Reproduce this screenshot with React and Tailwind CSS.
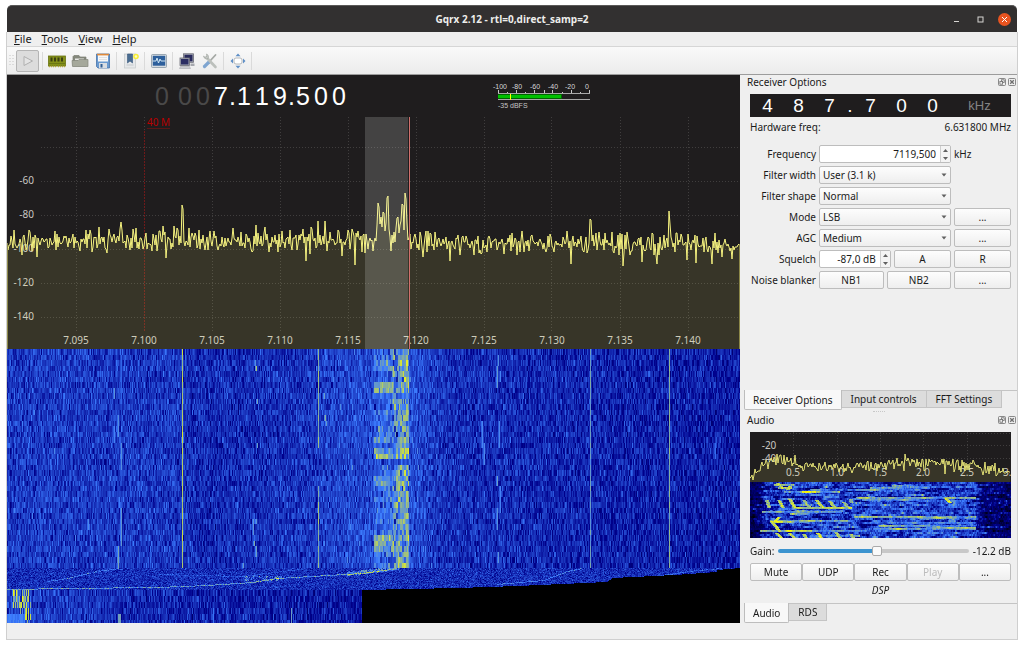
import React, { useLayoutEffect, useRef, useState } from 'react';

// small seeded generator so the noise is stable between renders
function makeRandom(seed) {
  let s = seed;
  return () => {
    s = (s + 0x6d2b79f5) | 0;
    let t = Math.imul(s ^ (s >>> 15), 1 | s);
    t = (t + Math.imul(t ^ (t >>> 7), 61 | t)) ^ t;
    return ((t ^ (t >>> 14)) >>> 0) / 4294967296;
  };
}

const gauss = (rnd) => rnd() + rnd() + rnd() + rnd() - 2;

// waterfall palette: black -> blue -> light blue -> yellow
function levelColor(v) {
  const i = Math.max(0, Math.min(170, v));
  if (i < 20) return [0, 0, 0];
  if (i < 70) return [0, 0, (140 * (i - 20)) / 50];
  if (i < 100) return [(60 * (i - 70)) / 30, (125 * (i - 70)) / 30, (115 * (i - 70)) / 30 + 140];
  if (i < 150) return [(195 * (i - 100)) / 50 + 60, (130 * (i - 100)) / 50 + 125, 255 - (255 * (i - 100)) / 50];
  return [255, 255 - (255 * (i - 150)) / 100, 0];
}

// linear interpolation over [x, y] points
function lerp(points, x) {
  if (x <= points[0][0]) return points[0][1];
  for (let i = 1; i < points.length; i++) {
    const [x1, y1] = points[i];
    const [x0, y0] = points[i - 1];
    if (x <= x1) return y0 + ((y1 - y0) * (x - x0)) / (x1 - x0 || 1);
  }
  return points[points.length - 1][1];
}

const CARRIERS = [
  { x: 175, level: 131, spread: 8 },
  { x: 311, level: 121, spread: 9 },
  { x: 583, level: 111, spread: 7 },
  { x: 662, level: 119, spread: 6 },
];

// weak drifting signals: x, first row, last row, level
const WEAK = [
  [114, 1, 9, 94], [114, 17, 21, 106], [111, 12, 15, 106], [107, 7, 8, 108], [107, 14, 16, 102],
  [112, 27, 28, 100], [114, 29, 35, 109], [111, 36, 39, 115],
  [249, 3, 3, 128], [248, 2, 2, 106], [250, 9, 9, 114], [250, 17, 17, 112], [249, 31, 31, 108],
  [246, 31, 33, 108], [247, 35, 35, 118], [249, 36, 37, 112], [236, 39, 39, 110],
  [317, 8, 8, 112], [318, 12, 12, 120], [319, 13, 13, 110], [345, 21, 21, 108],
  [491, 1, 2, 106], [490, 3, 6, 110], [493, 4, 5, 102], [475, 13, 17, 103], [477, 17, 20, 104],
  [492, 13, 17, 104], [490, 23, 24, 112], [493, 25, 29, 102], [490, 29, 32, 107], [491, 37, 38, 108],
  [81, 31, 32, 104], [708, 17, 19, 96],
];

const WIDE_ROWS = [6, 7, 19, 34, 35];
const MEDIUM_ROWS = [2, 3, 16, 18, 23, 24, 36];

const BLACK_EDGE = [
  [355, 242], [450, 240], [510, 238], [600, 234], [605, 230], [667, 227],
  [709, 224], [710, 222], [733, 220],
];

const STREAKS = [
  { pts: [[0, 241], [60, 240], [150, 239], [200, 237], [245, 234], [270, 230], [355, 225], [390, 220]], level: 34 },
  { pts: [[40, 233], [60, 230], [90, 223], [112, 220]], level: 22 },
  { pts: [[150, 226], [235, 228], [300, 220]], level: 10 },
  { pts: [[490, 236], [536, 232], [560, 223], [575, 220]], level: 22 },
  { pts: [[640, 229], [690, 222], [715, 220]], level: 16 },
];

function waterfallLevels(w, h) {
  const rnd = makeRandom(71);
  const out = new Float32Array(w * h);
  const rows = 40;
  const bounds = [];
  for (let r = 0; r <= rows; r++) bounds.push(Math.round(r * 5.5));

  for (let r = 0; r < rows; r++) {
    // activity inside the voice channel for this row
    let voice = 95;
    if (WIDE_ROWS.includes(r)) voice = 118;
    if (MEDIUM_ROWS.includes(r)) voice = 108;
    const quiet = r === 20;
    const row = new Float32Array(w);
    let cell = 0;
    for (let x = 0; x < w; x++) {
      const base = lerp([[0, 84], [170, 83], [195, 80], [290, 82], [345, 87], [410, 88], [440, 81], [733, 76]], x);
      row[x] = base + gauss(rnd) * 11;
      if (x >= 367 && x < 402 && !quiet) {
        if (x % 2 || rnd() > 0.75) cell = gauss(rnd);
        if (x < 386) row[x] = voice + cell * 15;
        else row[x] = lerp([[386, 100], [394, 114], [400, 118]], x) + cell * 25;
      }
    }
    CARRIERS.forEach((c) => {
      if (c.x === 311 && r > 17 && r < 25) return;
      row[c.x] = c.level + gauss(rnd) * c.spread;
    });
    WEAK.forEach(([x, a, b, level]) => {
      if (r >= a && r <= b) {
        row[x] = level;
        row[x - 1] = (row[x - 1] + level) / 2;
      }
    });
    for (let y = bounds[r]; y < bounds[r + 1]; y++) out.set(row, y * w);
  }

  // retuned section, one line per pixel
  for (let y = 220; y < 242; y++) {
    for (let x = 0; x < w; x++) out[y * w + x] = 81 + gauss(rnd) * 10;
  }
  STREAKS.forEach(({ pts, level }) => {
    for (let x = pts[0][0]; x < Math.min(w, pts[pts.length - 1][0]); x++) {
      const y = Math.round(lerp(pts, x));
      if (y < 242) out[y * w + x] += level * (0.4 + rnd() * 0.8);
    }
  });
  for (let x = 238; x < 275; x++) {
    for (let y = 228; y < 233; y++) {
      if (rnd() > 0.45) out[y * w + x] += 34 * rnd();
    }
  }
  for (let x = 340; x < 392; x++) {
    const y = Math.round(lerp([[340, 226], [392, 220]], x));
    for (let k = -2; k < 2; k++) {
      if (y + k >= 220) out[(y + k) * w + x] += 34 * rnd();
    }
  }

  for (let y = 242; y < h; y += 6) {
    const row = new Float32Array(w);
    for (let x = 0; x < w; x++) {
      row[x] = lerp([[0, 85], [60, 84], [130, 79], [355, 75]], x) + gauss(rnd) * 11;
    }
    const first = y < 256 ? 6 : 12;
    for (let x = first; x < 24; x++) if (rnd() > 0.45) row[x] = 98 + rnd() * 50;
    if (y > 262) for (let x = 0; x < 18; x++) row[x] = 96 + rnd() * 8;
    if (y > 254) row[284] = 112;
    if (y > 258) row[206] = 98;
    if (y > 265) [111, 112, 113].forEach((x) => { row[x] = 114; });
    for (let k = y; k < Math.min(h, y + 6); k++) out.set(row, k * w);
  }

  for (let x = 355; x < w; x++) {
    for (let y = Math.round(lerp(BLACK_EDGE, x)); y < h; y++) out[y * w + x] = 0;
  }
  return out;
}

// voice bars in the audio waterfall: y, from, to, level
const AUDIO_BARS = [
  [2, 24, 44, 126], [3, 142, 165, 120], [5, 28, 42, 130], [5, 120, 180, 110], [7, 60, 170, 102],
  [9, 34, 90, 112], [9, 52, 66, 150], [15, 106, 226, 118], [17, 112, 170, 106], [25, 42, 102, 132],
  [29, 12, 92, 112], [31, 40, 60, 118], [34, 104, 226, 118], [35, 150, 226, 106], [38, 20, 98, 122],
  [39, 20, 58, 132], [40, 120, 226, 102], [43, 128, 226, 108], [45, 180, 226, 116], [46, 124, 226, 112],
  [48, 10, 62, 122], [48, 70, 120, 104], [53, 60, 110, 108],
];

// chirps: x, y, dx, length
const AUDIO_CHIRPS = [
  [15, 18, 0.3, 8], [27, 18, 0.5, 8], [38, 17, 0.6, 9], [52, 18, 0.8, 8], [65, 18, 0.8, 8], [78, 19, 0.8, 6],
  [92, 20, 0.8, 5], [99, 17, 0.2, 4], [26, 1, 0.9, 6], [38, 4, -0.6, 4], [27, 35, -0.9, 6], [20, 40, 0.9, 10],
  [25, 51, 0.9, 5], [38, 51, 0.9, 5], [52, 52, 0.5, 4], [66, 51, 0.8, 5], [84, 50, 0.8, 6], [99, 52, 0.5, 4],
  [194, 16, 0.9, 5],
];

function audioLevels(w, h) {
  const rnd = makeRandom(19);
  const out = new Float32Array(w * h);
  for (let y = 0; y < h; y += 2) {
    const loud = gauss(rnd) * 6;
    let drift = 0;
    for (let x = 0; x < w; x++) {
      const base = lerp([[0, 50], [9, 58], [16, 80], [60, 87], [110, 85], [224, 86], [231, 66], [261, 54]], x);
      drift = drift * 0.72 + gauss(rnd) * 14;
      const v = base + drift + (x > 16 && x < 230 ? loud : 0);
      out[y * w + x] = v;
      if (y + 1 < h) out[(y + 1) * w + x] = v + gauss(rnd) * 4;
    }
  }
  AUDIO_BARS.forEach(([y, from, to, level]) => {
    let drift = 0;
    for (let x = from; x < to; x++) {
      drift = drift * 0.8 + gauss(rnd) * 11;
      for (let k = 0; k < 2; k++) {
        const i = (y + k) * w + x;
        out[i] = Math.max(out[i], level + drift - k * 6);
      }
    }
  });
  AUDIO_CHIRPS.forEach(([x, y, dx, len]) => {
    const peak = 128 + rnd() * 20;
    for (let i = 0; i < len; i++) {
      for (let k = 0; k < 4; k++) {
        const row = y + i;
        if (row < h) out[row * w + Math.round(x + dx * i) + k] = peak - Math.abs(k - 1.5) * 9 + gauss(rnd) * 12;
      }
    }
  });
  return out;
}

function Waterfall({ width, height, levels, label }) {
  const ref = useRef(null);

  useLayoutEffect(() => {
    const ctx = ref.current.getContext('2d');
    const image = ctx.createImageData(width, height);
    const data = levels(width, height);
    for (let i = 0; i < data.length; i++) {
      const [r, g, b] = levelColor(data[i]);
      image.data[i * 4] = r;
      image.data[i * 4 + 1] = g;
      image.data[i * 4 + 2] = b;
      image.data[i * 4 + 3] = 255;
    }
    ctx.putImageData(image, 0, 0);
  }, [width, height, levels]);

  return (
    <canvas
      ref={ref}
      width={width}
      height={height}
      role="img"
      aria-label={label}
      className="block h-full w-full [image-rendering:pixelated]"
    />
  );
}

// x -> y overrides for peaks and dips in the main trace
const PEAKS = {
  7: 113, 22: 113, 23: 115, 79: 113, 92: 110, 113: 112, 114: 105, 115: 113, 159: 141, 175: 88, 176: 92, 182: 111,
  203: 114, 226: 111, 249: 108, 275: 114, 299: 144, 305: 112, 311: 104, 318: 104, 331: 113, 335: 139, 348: 148,
  370: 108, 371: 86, 372: 90, 373: 107, 374: 100, 375: 110, 376: 95, 377: 96, 378: 114, 379: 106, 380: 81, 381: 79,
  382: 112, 384: 134, 387: 115, 389: 111, 390: 101, 391: 100, 392: 116, 393: 108, 394: 104, 395: 87, 396: 88,
  397: 113, 398: 76, 399: 82, 400: 106, 402: 121, 419: 114, 443: 144, 560: 114, 564: 147, 583: 102, 584: 103,
  605: 115, 616: 149, 635: 145, 650: 147, 662: 94, 663: 107, 680: 143, 705: 147, 715: 140, 725: 142,
};

function spectrumPoints() {
  const rnd = makeRandom(5);
  const pts = [];
  for (let x = 0; x <= 732; x++) {
    const base = lerp([[0, 126], [80, 124], [400, 123], [440, 126], [733, 127]], x);
    let y = base + gauss(rnd) * 10;
    if (rnd() > 0.97) y += 9;
    pts.push([x, Math.round(PEAKS[x] ?? y)]);
  }
  return pts;
}

function audioPoints() {
  const rnd = makeRandom(12);
  const pts = [];
  for (let x = 0; x <= 260; x++) {
    const base = lerp([[0, 47], [3, 43], [9, 42], [12, 32], [26, 28], [40, 28], [50, 34], [100, 35], [125, 35], [150, 30],
      [158, 28], [170, 33], [190, 29], [205, 33], [228, 33], [234, 38], [261, 39]], x);
    let y = base + gauss(rnd) * 5;
    if (rnd() > 0.93) y += 6;
    pts.push([x, Math.round(Math.min(48, y))]);
  }
  return pts;
}

const toLine = (pts) => pts.map(([x, y], i) => `${i ? 'L' : 'M'}${x} ${y}`).join('');

const SPECTRUM = spectrumPoints();
const AUDIO = audioPoints();

const pct = (x, total) => `${(x / total) * 100}%`;

const FREQ_TICKS = [
  [69, '7.095'], [137, '7.100'], [205, '7.105'], [273, '7.110'], [341, '7.115'],
  [409, '7.120'], [477, '7.125'], [545, '7.130'], [613, '7.135'], [681, '7.140'],
];
const DB_TICKS = [[30, ''], [64, '-60'], [98, '-80'], [132, '-100'], [166, '-120'], [200, '-140']];

function SpectrumPlot() {
  return (
    <svg width="100%" height="232" className="block shrink-0 font-['Noto_Sans',sans-serif] text-[10px]" role="img" aria-label="Spectrum">
      <g stroke="#403e3e" strokeDasharray="1 2" shapeRendering="crispEdges">
        {DB_TICKS.map(([y]) => <line key={y} x1="34" x2="100%" y1={y} y2={y} />)}
        {FREQ_TICKS.map(([x]) => <line key={x} x1={pct(x, 733)} x2={pct(x, 733)} y1="0" y2="214" />)}
      </g>
      <line x1={pct(137, 733)} x2={pct(137, 733)} y1="14" y2="214" stroke="#6e1a1a" strokeDasharray="2 1" shapeRendering="crispEdges" />
      <text x={pct(140, 733)} y="9" fill="#b80000">40 M</text>
      <line x1={pct(140, 733)} x2={pct(163, 733)} y1="11" y2="11" stroke="#5a1616" shapeRendering="crispEdges" />
      <g fill="#c9c7c2">
        {DB_TICKS.map(([y, t]) => <text key={y} x="27" y={y + 3} textAnchor="end">{t}</text>)}
        {FREQ_TICKS.map(([x, t]) => <text key={x} x={pct(x, 733)} y="227" textAnchor="middle">{t}</text>)}
      </g>
      <svg width="100%" height="232" viewBox="0 0 733 232" preserveAspectRatio="none">
        <path d={`${toLine(SPECTRUM)}L732 232L0 232Z`} fill="#ffff80" fillOpacity="0.11" />
        <path d={toLine(SPECTRUM)} fill="none" stroke="#f6f380" strokeWidth="1" />
        <path d="M732.5 127V232M0.5 126V232" stroke="#8b8748" strokeWidth="1" />
        <rect x="358" y="0" width="43" height="232" fill="#fff" fillOpacity="0.17" />
        <path d="M402.500 0V232" stroke="#d0706c" strokeWidth="1" />
      </svg>
    </svg>
  );
}

function SignalMeter() {
  return (
    <svg width="104" height="42" viewBox="0 0 104 42" className="shrink-0 font-['Liberation_Sans',sans-serif] text-[7px]" role="img" aria-label="Signal level -35 dBFS">
      <g fill="#d8d8d8" textAnchor="middle">
        <text x="12" y="14">-100</text>
        <text x="29" y="14">-80</text>
        <text x="47" y="14">-60</text>
        <text x="65" y="14">-40</text>
        <text x="82" y="14">-20</text>
        <text x="99" y="14">0</text>
      </g>
      <path d="M10.500 15v4M19.500 17v2M28.500 15v4M37.500 17v2M46.500 15v4M56.500 15v4M64.500 15v4M74.500 17v2M83.500 15v4M92.500 17v2M101.500 15v4" stroke="#c8c8c8" shapeRendering="crispEdges" />
      <path d="M10 18.500H102M10 24.500H102" stroke="#a8a8a8" shapeRendering="crispEdges" />
      <rect x="10" y="19" width="64" height="5" fill="#006400" />
      <rect x="10" y="20" width="63" height="3" fill="#00c000" />
      <rect x="22" y="19" width="1" height="6" fill="#ffff00" />
      <text x="10" y="33" fill="#c4c4c4">-35 dBFS</text>
    </svg>
  );
}

function FrequencyDisplay() {
  return (
    <div className="flex items-center font-['Liberation_Sans',sans-serif] text-[25px] leading-none text-white">
      {'0 007.119.500'.split('').map((ch, i) => {
        const narrow = ch === '.' || ch === ' ';
        return (
          <span
            key={i}
            className={`flex justify-center ${narrow ? 'w-[5px]' : 'w-[18px]'} ${i < 4 ? 'text-[#4a4949]' : ''}`}
          >
            {ch}
          </span>
        );
      })}
    </div>
  );
}

function AudioPlot() {
  return (
    <svg width="100%" height="50" className="block bg-[#1f1d1e] font-['Noto_Sans',sans-serif] text-[10px]" role="img" aria-label="Audio spectrum">
      <g stroke="#403e3e" strokeDasharray="1 2" shapeRendering="crispEdges">
        {[1, 13, 26].map((y) => <line key={y} x1="34" x2="100%" y1={y} y2={y} />)}
        {[43, 87, 130, 173, 217].map((x) => <line key={x} x1={pct(x, 261)} x2={pct(x, 261)} y1="0" y2="36" />)}
      </g>
      <g fill="#c9c7c2" textAnchor="middle">
        <text x="19" y="17">-20</text>
        <text x="19" y="30">-40</text>
        {[[43, '0.5'], [87, '1.0'], [130, '1.5'], [173, '2.0'], [217, '2.5'], [260, '3.0']].map(([x, t]) => (
          <text key={t} x={pct(x, 261)} y="44">{t}</text>
        ))}
      </g>
      <svg width="100%" height="50" viewBox="0 0 261 50" preserveAspectRatio="none">
        <path d={`${toLine(AUDIO)}L260 50L0 50Z`} fill="#ffff80" fillOpacity="0.11" />
        <path d={toLine(AUDIO)} fill="none" stroke="#f2ef7c" strokeWidth="1" strokeOpacity="0.9" />
      </svg>
    </svg>
  );
}

/* ---- toolbar icons ---- */

const MemoryIcon = () => (
  <svg width="18" height="16" viewBox="0 0 18 16">
    <rect x="0.500" y="3" width="17" height="10" fill="#84901a" stroke="#6a7412" strokeWidth="0.8" />
    <path d="M3.500 4.500v4M7 4.500v4M10.500 4.500v4M14 4.500v4" stroke="#3c4012" strokeWidth="2" />
    <path d="M1 13.500h7M10 13.500h7" stroke="#b3a63a" strokeWidth="1.500" strokeDasharray="1 1" />
    <path d="M1 10.500h16" stroke="#6b7714" />
  </svg>
);

const FolderIcon = () => (
  <svg width="18" height="16" viewBox="0 0 18 16">
    <path d="M2 13V3.500L3 2.500h5l1 1.500h6v9z" fill="#85887c" stroke="#7b7e73" strokeWidth="0.7" />
    <path d="M4 5.500h9l-.5 2H4z" fill="#e9e9e6" />
    <path d="M1 7.500h6l1-1h9v7H1.500z" fill="#a5a89b" stroke="#84877b" strokeWidth="0.7" />
  </svg>
);

const SaveIcon = () => (
  <svg width="16" height="16" viewBox="0 0 16 16">
    <path d="M1.500 1h13v14H3l-1.500-1.500z" fill="#6a9ad0" stroke="#4672a8" strokeWidth="0.8" />
    <rect x="3" y="1.500" width="10" height="7" fill="#f8f8f8" />
    <rect x="2" y="0.800" width="12" height="1.600" fill="#e08a3a" />
    <path d="M4 4.500h8M4 6.500h8" stroke="#d9d9d9" strokeWidth="0.7" />
    <rect x="4" y="10" width="8" height="5" fill="#d9dde2" />
    <rect x="5.500" y="11" width="2" height="3.500" fill="#305f96" />
  </svg>
);

const BookmarkIcon = () => (
  <svg width="16" height="16" viewBox="0 0 16 16">
    <rect x="1.500" y="1" width="11" height="14" fill="#e6e8ea" stroke="#c9ccce" strokeWidth="0.8" />
    <path d="M4.500 1h5v9L7 8l-2.500 2z" fill="#4a6d92" stroke="#35557a" strokeWidth="0.6" />
    <path d="M3.500 12h7" stroke="#c3c8cc" />
    <circle cx="13" cy="3.500" r="2.800" fill="#f7ee3a" />
    <circle cx="13" cy="3.500" r="1.200" fill="#fffdc0" />
  </svg>
);

const MonitorIcon = () => (
  <svg width="16" height="16" viewBox="0 0 16 16">
    <rect x="0.500" y="1.500" width="15" height="13" rx="1" fill="#d5dbe0" stroke="#8897a5" strokeWidth="0.800" />
    <rect x="1.800" y="2.800" width="12.400" height="9.900" fill="#2d5f9c" />
    <path d="M2 8h3l1-3 1.500 5 1.500-4 1 2h4" fill="none" stroke="#cfe6f4" />
  </svg>
);

const NetworkIcon = () => (
  <svg width="16" height="16" viewBox="0 0 16 16">
    <rect x="4.500" y="0.800" width="10" height="8.500" fill="#a9acb8" stroke="#6a6c76" strokeWidth="0.800" />
    <rect x="5.500" y="1.800" width="8" height="6.500" fill="#282a5c" />
    <rect x="1" y="5" width="9.500" height="7.500" fill="#a9acb8" stroke="#6a6c76" strokeWidth="0.800" />
    <rect x="2" y="6" width="7.500" height="5.500" fill="#2b2e63" />
    <path d="M1.500 13.500h9l1 2H0.500z" fill="#c9cbd0" stroke="#9c9ea5" strokeWidth="0.500" />
    <path d="M11.500 10.500h4v2.500h-4z" fill="#a6a8ae" />
  </svg>
);

const ToolsIcon = () => (
  <svg width="16" height="16" viewBox="0 0 16 16" strokeLinecap="round">
    <path d="M13.500 2L7.500 8.500" stroke="#a5a9a5" strokeWidth="1.800" />
    <path d="M7 9l-4.500 4.500" stroke="#7fa5d0" strokeWidth="3.200" />
    <path d="M4.500 4.500L13.500 14" stroke="#bcc0bc" strokeWidth="2.600" />
    <path d="M1.500 3.500a3 3 0 0 0 4.500 2 3 3 0 0 0-1.500-4.500l.3 2.300-1.300.8z" fill="#c3c7c3" stroke="#9ea29e" strokeWidth="0.600" />
  </svg>
);

const FullscreenIcon = () => (
  <svg width="16" height="16" viewBox="0 0 16 16">
    <rect x="4" y="5" width="8" height="6" rx="2" fill="#fff" stroke="#b4b8bb" />
    <path d="M8 0.500l2.500 2.700h-5zM8 15.500l2.500-2.700h-5zM0.500 8l2.500-2.500v5zM15.500 8L13 5.500v5z" fill="#5f8fc6" />
  </svg>
);

const Separator = () => <span className="mx-px h-[18px] w-px bg-[#dadada]" />;

function ToolButton({ label, children }) {
  return (
    <button type="button" aria-label={label} className="flex h-[22px] w-[21px] items-center justify-center">
      {children}
    </button>
  );
}

function Handle() {
  return (
    <svg width="5" height="12" viewBox="0 0 5 12" className="shrink-0">
      <path d="M1 0v12M4 0v12" stroke="#c4c4c4" strokeDasharray="1 2" />
    </svg>
  );
}

function Toolbar() {
  return (
    <div className="flex h-[29px] shrink-0 items-center gap-[2px] border-t border-b border-t-[#d6d6d6] border-b-[#9c9c9c] bg-linear-to-b from-[#f9f9f9] to-[#ececec] px-[2px]">
      <Handle />
      <button type="button" aria-label="Start DSP" className="flex h-[22px] w-[23px] items-center justify-center rounded-[2px] border border-[#b4b4b4] bg-[#dcdcdc]">
        <svg width="12" height="12" viewBox="0 0 12 12">
          <path d="M2 1.500L10.500 6L2 10.500z" fill="#e4e4e4" stroke="#b0b0b0" />
        </svg>
      </button>
      <Separator />
      <ToolButton label="Hardware devices"><MemoryIcon /></ToolButton>
      <ToolButton label="Open settings"><FolderIcon /></ToolButton>
      <ToolButton label="Save settings"><SaveIcon /></ToolButton>
      <Separator />
      <ToolButton label="Bookmarks"><BookmarkIcon /></ToolButton>
      <Separator />
      <ToolButton label="I/O monitor"><MonitorIcon /></ToolButton>
      <Separator />
      <ToolButton label="Remote control"><NetworkIcon /></ToolButton>
      <ToolButton label="Remote settings"><ToolsIcon /></ToolButton>
      <Separator />
      <ToolButton label="Full screen"><FullscreenIcon /></ToolButton>
      <Separator />
    </div>
  );
}

function TitleBar() {
  return (
    <header className="grid h-[27px] shrink-0 grid-cols-[1fr_auto_1fr] items-center rounded-t-[5px] border-t border-[#5a5958] bg-[#323030] px-1">
      <span />
      <h1 className="font-['Open_Sans',sans-serif] text-[10px] font-bold text-[#eeeeec]">Gqrx 2.12 - rtl=0,direct_samp=2</h1>
      <div className="flex items-center justify-end gap-[11px] pr-[2px] text-[#d8d6d3]">
        <button type="button" aria-label="Minimize" className="flex h-[13px] w-[13px] items-center justify-center">
          <svg width="7" height="7" viewBox="0 0 7 7"><path d="M1 5.500h5" stroke="currentColor" /></svg>
        </button>
        <button type="button" aria-label="Maximize" className="flex h-[13px] w-[13px] items-center justify-center">
          <svg width="7" height="7" viewBox="0 0 7 7"><rect x="1" y="1" width="5" height="5" fill="none" stroke="currentColor" /></svg>
        </button>
        <button type="button" aria-label="Close" className="flex h-[13px] w-[13px] items-center justify-center rounded-full bg-[#e95420] text-white">
          <svg width="7" height="7" viewBox="0 0 7 7"><path d="M1 1l5 5M6 1l-5 5" stroke="currentColor" /></svg>
        </button>
      </div>
    </header>
  );
}

function MenuBar() {
  return (
    <nav className="flex h-[14px] shrink-0 items-center gap-[10px] bg-[#efefef] px-[7px]">
      {['File', 'Tools', 'View', 'Help'].map((m) => (
        <button key={m} type="button" className="text-[11px] leading-[14px]">
          <u className="underline-offset-1">{m[0]}</u>{m.slice(1)}
        </button>
      ))}
    </nav>
  );
}

function DockTitle({ children }) {
  return (
    <div className="flex h-[13px] items-center justify-between pr-px pl-[7px]">
      <h2>{children}</h2>
      <div className="flex gap-[2px] text-[#6e6e6e]">
        <button type="button" aria-label={`Float ${children}`}>
          <svg width="8" height="8" viewBox="0 0 8 8" fill="none" stroke="currentColor" strokeWidth="0.800">
            <rect x="0.500" y="0.500" width="7" height="7" rx="1" />
            <rect x="3.500" y="1.800" width="2.700" height="2.700" />
            <rect x="1.900" y="3.500" width="2.700" height="2.700" fill="#efefef" />
          </svg>
        </button>
        <button type="button" aria-label={`Close ${children}`}>
          <svg width="8" height="8" viewBox="0 0 8 8" fill="none" stroke="currentColor">
            <rect x="0.500" y="0.500" width="7" height="7" rx="1" strokeWidth="0.800" />
            <path d="M2.200 2.200l3.600 3.600M5.800 2.200L2.200 5.800" strokeWidth="1.300" />
          </svg>
        </button>
      </div>
    </div>
  );
}

function PushButton({ className = '', ...props }) {
  return (
    <button
      type="button"
      className={`h-[18px] min-w-0 rounded-[2px] border border-[#bdbdbd] bg-linear-to-b from-[#fdfdfd] to-[#eeeeee] text-center leading-4 disabled:text-[#bcbcbc] ${className}`}
      {...props}
    />
  );
}

function Combo({ id, options }) {
  return (
    <div className="relative">
      <select
        id={id}
        className="block h-[18px] w-full appearance-none rounded-[2px] border border-[#bdbdbd] bg-linear-to-b from-[#fdfdfd] to-[#eeeeee] pr-4 pl-[3px] leading-4"
      >
        {options.map((o) => <option key={o}>{o}</option>)}
      </select>
      <svg width="6" height="4" viewBox="0 0 6 4" className="pointer-events-none absolute top-[7px] right-1">
        <path d="M0.500 0.500h5L3 3.500z" fill="#606060" />
      </svg>
    </div>
  );
}

function SpinBox({ id, value, onChange }) {
  return (
    <div className="flex h-[18px] min-w-0 overflow-hidden rounded-[2px] border border-[#bdbdbd] bg-white">
      <input
        id={id}
        type="text"
        value={value}
        onChange={(e) => onChange(e.target.value)}
        className="w-0 min-w-0 flex-1 pr-1 text-right leading-4 outline-none"
      />
      <div className="flex w-[10px] flex-col border-l border-[#cfcfcf] bg-[#f4f4f4]">
        <button type="button" aria-label="Increase" className="flex flex-1 items-center justify-center">
          <svg width="5" height="3" viewBox="0 0 5 3"><path d="M0 3h5L2.500 0z" fill="#606060" /></svg>
        </button>
        <button type="button" aria-label="Decrease" className="flex flex-1 items-center justify-center">
          <svg width="5" height="3" viewBox="0 0 5 3"><path d="M0 0h5L2.500 3z" fill="#606060" /></svg>
        </button>
      </div>
    </div>
  );
}

function DockTabs({ tabs }) {
  return (
    <div role="tablist" className="ml-1 flex h-5 items-start border-t border-[#c4c4c4]">
      {tabs.map((t, i) => (
        <button
          key={t}
          type="button"
          role="tab"
          aria-selected={i === 0}
          className={
            i === 0
              ? '-mt-px h-5 rounded-b-[2px] border border-t-0 border-[#bdbdbd] bg-[#f8f8f8] px-2 leading-5'
              : 'h-[17px] border border-t-0 border-l-0 border-[#c4c4c4] bg-[#dcdcdc] px-[9px] leading-4'
          }
        >
          {t}
        </button>
      ))}
    </div>
  );
}

function OffsetDisplay() {
  return (
    <div className="flex h-[23px] items-center bg-[#1f1d1e] font-['Liberation_Sans',sans-serif] text-[19px] leading-none text-white">
      <div className="flex flex-1 justify-around pl-[2px]">
        {'487.700'.split('').map((ch, i) => (
          <span key={i} className={ch === '.' ? 'w-[10px] text-center' : 'w-[31px] text-center'}>{ch}</span>
        ))}
      </div>
      <span className="w-[65px] text-center text-[13px] text-[#858384]">kHz</span>
    </div>
  );
}

function ReceiverOptions() {
  const [freq, setFreq] = useState('7119,500');
  const [squelch, setSquelch] = useState('-87,0 dB');
  const label = 'flex justify-end whitespace-nowrap';

  return (
    <section className="flex flex-1 flex-col">
      <DockTitle>Receiver Options</DockTitle>
      <div className="flex flex-1 flex-col pt-[6px] pr-[6px] pl-[10px]">
        <OffsetDisplay />
        <div className="flex h-5 items-center justify-between">
          <span>Hardware freq:</span>
          <span>6.631800 MHz</span>
        </div>
        <div className="mt-2 grid grid-cols-[66px_1fr_57px] items-center gap-[3px]">
          <label htmlFor="frequency" className={label}>Frequency</label>
          <SpinBox id="frequency" value={freq} onChange={setFreq} />
          <span>kHz</span>

          <label htmlFor="filter-width" className={label}>Filter width</label>
          <Combo id="filter-width" options={['User (3.1 k)', 'Wide', 'Normal', 'Narrow']} />
          <span />

          <label htmlFor="filter-shape" className={label}>Filter shape</label>
          <Combo id="filter-shape" options={['Normal', 'Soft', 'Sharp']} />
          <span />

          <label htmlFor="mode" className={label}>Mode</label>
          <Combo id="mode" options={['LSB', 'USB', 'AM', 'CW-L', 'CW-U']} />
          <PushButton aria-label="Mode options">...</PushButton>

          <label htmlFor="agc" className={label}>AGC</label>
          <Combo id="agc" options={['Medium', 'Fast', 'Slow', 'Off']} />
          <PushButton aria-label="AGC options">...</PushButton>

          <label htmlFor="squelch" className={label}>Squelch</label>
          <div className="grid grid-cols-[5fr_4fr] gap-[3px]">
            <SpinBox id="squelch" value={squelch} onChange={setSquelch} />
            <PushButton>A</PushButton>
          </div>
          <PushButton>R</PushButton>

          <span className={label}>Noise blanker</span>
          <div className="grid grid-cols-2 gap-[3px]">
            <PushButton>NB1</PushButton>
            <PushButton>NB2</PushButton>
          </div>
          <PushButton aria-label="Noise blanker options">...</PushButton>
        </div>
      </div>
      <DockTabs tabs={['Receiver Options', 'Input controls', 'FFT Settings']} />
    </section>
  );
}

function AudioDock() {
  const [gain, setGain] = useState(52);

  return (
    <section className="flex flex-col">
      <DockTitle>Audio</DockTitle>
      <div className="flex flex-col pt-[6px] pr-[6px] pl-[10px]">
        <AudioPlot />
        <div className="h-14">
          <Waterfall width={261} height={56} levels={audioLevels} label="Audio waterfall" />
        </div>
        <div className="flex h-[25px] items-center gap-1">
          <label htmlFor="gain">Gain:</label>
          <input
            id="gain"
            type="range"
            min="0"
            max="100"
            value={gain}
            onChange={(e) => setGain(Number(e.target.value))}
            style={{ '--fill': `${gain}%` }}
            className="h-3 min-w-0 flex-1 appearance-none bg-transparent [&::-webkit-slider-runnable-track]:h-1 [&::-webkit-slider-runnable-track]:rounded-full [&::-webkit-slider-runnable-track]:bg-[linear-gradient(to_right,#3c94cf_var(--fill),#c8c8c8_var(--fill))] [&::-webkit-slider-thumb]:-mt-[3px] [&::-webkit-slider-thumb]:h-[10px] [&::-webkit-slider-thumb]:w-[10px] [&::-webkit-slider-thumb]:appearance-none [&::-webkit-slider-thumb]:rounded-[2px] [&::-webkit-slider-thumb]:border [&::-webkit-slider-thumb]:border-[#aaaaaa] [&::-webkit-slider-thumb]:bg-[#fafafa]"
          />
          <output htmlFor="gain">-12.2 dB</output>
        </div>
        <div className="grid grid-cols-5">
          <PushButton>Mute</PushButton>
          <PushButton>UDP</PushButton>
          <PushButton>Rec</PushButton>
          <PushButton disabled>Play</PushButton>
          <PushButton aria-label="Audio options">...</PushButton>
        </div>
        <p className="h-[22px] text-center leading-[18px] italic">DSP</p>
      </div>
      <DockTabs tabs={['Audio', 'RDS']} />
    </section>
  );
}

export default function App() {
  return (
    <div className="flex h-screen flex-col bg-white px-[7px] pt-[5px] pb-[6px] font-['Noto_Sans',sans-serif] text-[10px] leading-[14px] text-[#1a1a1a]">
      <TitleBar />
      <div className="-mx-px flex min-h-0 flex-1 flex-col border-x border-b border-[#cfcfcf] bg-[#efefef]">
        <MenuBar />
        <Toolbar />
        <main className="flex min-h-0 flex-1">
          <div className="flex min-w-0 flex-1 flex-col bg-[#1f1d1e]">
            <div className="flex h-[42px] shrink-0 items-center justify-between pr-[148px] pl-[146px]">
              <FrequencyDisplay />
              <SignalMeter />
            </div>
            <SpectrumPlot />
            <div className="min-h-0 flex-1">
              <Waterfall width={733} height={275} levels={waterfallLevels} label="Waterfall" />
            </div>
          </div>
          <aside className="flex w-[277px] shrink-0 flex-col">
            <ReceiverOptions />
            <div className="mx-auto my-px h-px w-3 border-t border-dotted border-[#c8c8c8]" />
            <AudioDock />
          </aside>
        </main>
        <footer className="h-4 shrink-0" />
      </div>
    </div>
  );
}
